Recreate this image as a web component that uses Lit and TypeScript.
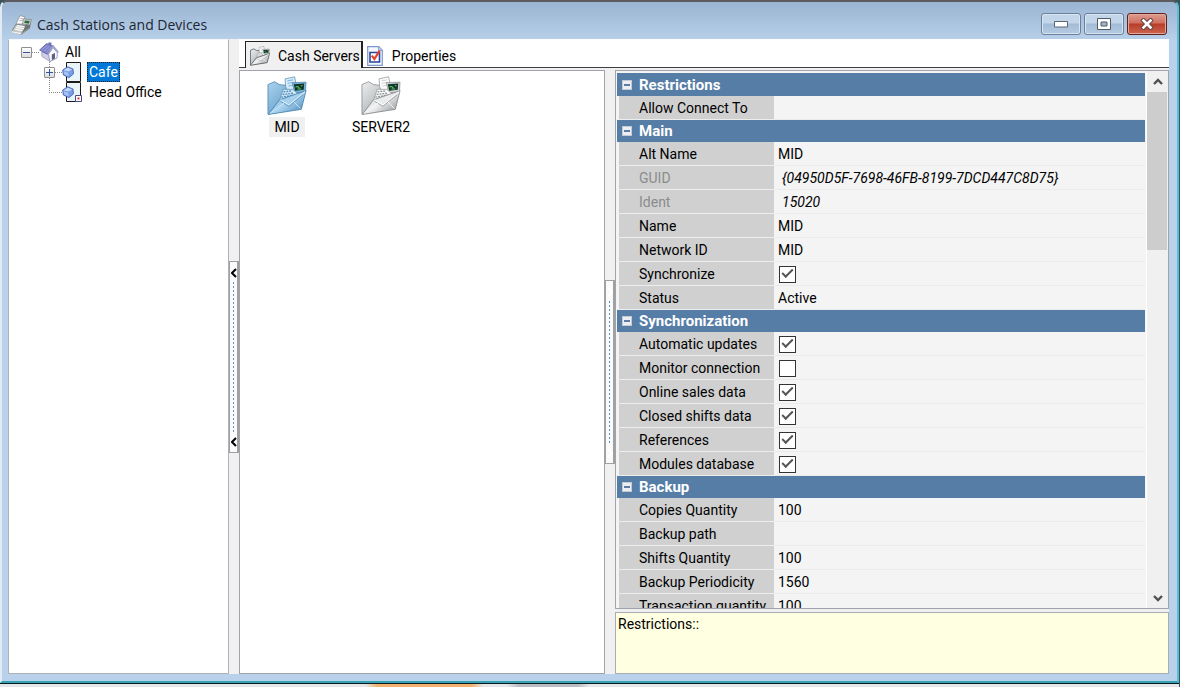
import { LitElement, html, css, svg, nothing } from "lit";
import { customElement, property, state } from "lit/decorators.js";
import { classMap } from "lit/directives/class-map.js";

type Value = string | boolean;
interface Row { label: string; value: Value; readonly?: boolean; }
interface Section { title: string; rows: Row[]; }

const SECTIONS: Section[] = [
  { title: "Restrictions", rows: [{ label: "Allow Connect To", value: "" }] },
  {
    title: "Main",
    rows: [
      { label: "Alt Name", value: "MID" },
      { label: "GUID", value: "{04950D5F-7698-46FB-8199-7DCD447C8D75}", readonly: true },
      { label: "Ident", value: "15020", readonly: true },
      { label: "Name", value: "MID" },
      { label: "Network ID", value: "MID" },
      { label: "Synchronize", value: true },
      { label: "Status", value: "Active" },
    ],
  },
  {
    title: "Synchronization",
    rows: [
      { label: "Automatic updates", value: true },
      { label: "Monitor connection", value: false },
      { label: "Online sales data", value: true },
      { label: "Closed shifts data", value: true },
      { label: "References", value: true },
      { label: "Modules database", value: true },
    ],
  },
  {
    title: "Backup",
    rows: [
      { label: "Copies Quantity", value: "100" },
      { label: "Backup path", value: "" },
      { label: "Shifts Quantity", value: "100" },
      { label: "Backup Periodicity", value: "1560" },
      { label: "Transaction quantity", value: "100" },
    ],
  },
];

const registerIcon = html`<svg width="20" height="20" viewBox="0 0 20 20" aria-hidden="true">
  <path d="M0 16 4 9 15 11 18 13 9 19.5Z" fill="#c4c7c2" stroke="#6d7071" stroke-width=".7"/>
  <path d="M0 16 9 18 9 19.6 0 17.2Z" fill="#f4f4f0"/>
  <path d="M9 18.5 18 12.5 19 6 14 9 12 14Z" fill="#6d7174"/>
  <path d="M4 9 8 .6 13 2 11 9Z" fill="#fdfdfb" stroke="#83868a" stroke-width=".7"/>
  <path d="M8.4 3.6h3M7.6 5.6h3" stroke="#9a9a9a" stroke-width=".8"/>
  <path d="M11.4 4 19.4 4.6 18 10 10.6 9Z" fill="#dfe1dc" stroke="#74777a" stroke-width=".7"/>
  <path d="M12.8 5.4l5 .3-.8 3-4.8-.6Z" fill="#2c6b3e"/>
  <path d="M4 12.4l8 1.4M3 14.2l7.4 1.4M5 10.6l7.4 1.2" stroke="#fff" stroke-width="1.1"/>
</svg>`;

const houseIcon = html`<svg width="20" height="20" viewBox="0 0 20 20" aria-hidden="true">
  <path d="M2.6 10 11 12 11 19.4 3 14.6Z" fill="#cfcfe8" stroke="#8585ae" stroke-width=".6"/>
  <path d="M9.4 12 14 5.6 18.4 11 18 16 11 19.6Z" fill="#fbfbff" stroke="#8a8aac" stroke-width=".8"/>
  <path d="M.6 8 7.6 1.6 14.4 4.2 8.6 12.4Z" fill="#7e81c8" stroke="#5c5fa4" stroke-width=".8"/>
  <path d="M2.6 8 8.4 3.2M4.8 9.2 10.6 4M7 10.6 12.6 4.8" stroke="#abaee2" stroke-width=".8"/>
  <path d="M8.8 12.6 14.4 4.4 19.4 10.6" fill="none" stroke="#a2a4c8" stroke-width="1.6"/>
  <path d="M12.8 12.6 16 11v5.6L12.8 18.2Z" fill="#5d5e86"/>
  <path d="M9.4.4h3v3.2l-3-.8Z" fill="#6c6fb0"/>
</svg>`;

const stationIcon = (mark: boolean) => html`<svg width="20" height="20" viewBox="0 0 20 20" aria-hidden="true">
  <path d="M4.5 .5h14v19h-14Z" fill="#e9f4f9" stroke="#1a1a1a"/>
  <path d="M.7 8 5.6 4.8 11 7 11.4 12 7 15.6 1.4 13Z" fill="#7a9ee6" stroke="#4563b4" stroke-width=".9"/>
  <path d="M1.6 8.2 5.8 5.7 10.2 7.4 6.4 9.6Z" fill="#c5daf8"/>
  <path d="M1.6 9.2 6.2 10.6 6.6 14.4 2.2 12.4Z" fill="#a4c2f4"/>
  ${mark ? svg`<path d="M13.5 13.5h6v6h-6Z" fill="#fff" stroke="#4a4a86"/><path d="M15.5 15.5h2v2h-2Z" fill="#d8323a"/>` : nothing}
</svg>`;

const folderIcon = (size: number, blue: boolean) => {
  const small = size < 30;
  const edge = blue ? "#4983ab" : small ? "#5f6366" : "#85898c";
  const light = blue ? "#a9d3ef" : "#eceeef";
  const mid = blue ? "#78b0d8" : "#cfd2d4";
  const dark = blue ? "#4f8dbb" : "#94989b";
  const paper = blue ? "#d6eaf8" : "#fcfcfc";
  const id = `${blue ? "b" : "g"}${size}`;
  return html`<svg width=${size} height=${size} viewBox="0 0 42 42" aria-hidden="true">
    <defs>
      <linearGradient id=${"back" + id} x1="0" y1="0" x2="1" y2="1"><stop offset="0" stop-color=${light}/><stop offset="1" stop-color=${dark}/></linearGradient>
      <linearGradient id=${"front" + id} x1="0" y1="0" x2="1" y2=".8"><stop offset="0" stop-color=${mid}/><stop offset=".55" stop-color=${light}/><stop offset="1" stop-color=${dark}/></linearGradient>
    </defs>
    <path d="M1 9 8 6 13 9 38 12 34 34 1 40Z" fill=${`url(#back${id})`} stroke=${edge} stroke-width=${small ? 1.8 : 0.8}/>
    <path d="M19 3 29 .8 30.4 8 31 14 22 17 19.5 11Z" fill=${paper} stroke=${edge} stroke-width=".7"/>
    <path d="M21.4 5.2l6-1.2M21.8 7.8l6-1.2M22.4 10.6l5-1" stroke=${mid} stroke-width="1"/>
    <path d="M26.6 7 41 6.4 40.4 17 29 18Z" fill=${mid} stroke=${edge} stroke-width=".7"/>
    <path d="M28.2 8.6 39 8 38.6 14.4 29.6 15.4Z" fill="#12342a"/>
    <path d="M30 11.8l2-1 2 1.8M35.4 10.2h2M32 13.6h4" fill="none" stroke="#57c962" stroke-width="1.1"/>
    <path d="M17 14 27 14 34 20 12 29Z" fill=${paper} stroke=${edge} stroke-width=".7"/>
    <path d="M17.4 16.6l9-1M16.4 19.4l12-1.4M15 22.2l14-2.2" stroke=${dark} stroke-width="1.5" stroke-dasharray="2 1"/>
    <path d="M1.4 40.4 13 25 41 15.4 36 35Z" fill=${`url(#front${id})`} stroke=${edge} stroke-width=${small ? 1.8 : 0.9}/>
    <path d="M14 25 23 30.4 40 16.4" fill="none" stroke=${paper} stroke-width="1.3"/>
    <path d="M14 26.4 23 31.8 38 19.6" fill="none" stroke=${edge} stroke-width=".7"/>
    <path d="M3 39.4 18 28.4M35 34 28 27" fill="none" stroke=${paper} stroke-width=".9"/>
  </svg>`;
};

const propertiesIcon = html`<svg width="16" height="20" viewBox="0 0 16 20" aria-hidden="true">
  <path d="M.7.7h11l3.6 3.6v15H.7Z" fill="#f3f7ff" stroke="#7e98cc" stroke-width="1.2"/>
  <path d="M11.6.8v3.6h3.6" fill="#c4d4f0" stroke="#7e98cc" stroke-width=".9"/>
  <path d="M3 6.5h9.5v9.5H3Z" fill="#fff" stroke="#26469c" stroke-width="1.6"/>
  <path d="M4.8 9.6 7.4 13 12.6 4.6" fill="none" stroke="#e2452c" stroke-width="2.2"/>
</svg>`;

@customElement("split-bar")
class SplitBar extends LitElement {
  @property() arrow: "left" | "right" = "left";
  static styles = css`
    :host { display: flex; flex-direction: column; justify-content: center; background: #f0f0f0; }
    .grip {
      box-sizing: border-box; width: 100%; height: 192px; padding: 6px 0 5px; border: 1px solid #a0a0a0; border-right-width: 2px;
      background: #fafafa; display: flex; flex-direction: column; align-items: center; gap: 4px; cursor: ew-resize;
    }
    .grip.right { height: 184px; }
    .dots { flex: 1; width: 1px; background: repeating-linear-gradient(#5b90c2 0 2px, transparent 2px 4px); }
    path { fill: none; stroke: #000; stroke-width: 2; }
    .right path { stroke: #fff; }
  `;
  render() {
    const tip = html`<svg width="6" height="10" viewBox="0 0 6 10" aria-hidden="true">
      <path d=${this.arrow === "left" ? "M5 1 1 5 5 9" : "M1 1 5 5 1 9"}/></svg>`;
    return html`<button class=${"grip " + this.arrow} aria-label="Toggle pane">${tip}<span class="dots"></span>${tip}</button>`;
  }
}

@customElement("station-tree")
class StationTree extends LitElement {
  @state() private selected = "Cafe";
  static styles = css`
    :host { display: block; background: #fff; padding: 2px 0 0 12px; overflow: hidden; }
    ul { list-style: none; margin: 0; padding: 0; }
    ul ul { margin-left: 23px; }
    .node { display: flex; align-items: center; height: 20px; }
    .box {
      box-sizing: border-box; width: 11px; height: 11px; padding: 0; border: 1px solid #8f8f8f; border-radius: 1px;
      background: linear-gradient(#fff, #dcdcdc); display: grid; place-items: center; color: #34539c; flex: none;
    }
    .line { width: 7px; height: 1px; background: repeating-linear-gradient(90deg, #8a8a8a 0 1px, transparent 1px 2px); }
    .line.wide { width: 13px; margin-left: 5px; }
    .node svg { flex: none; }
    .last { background: repeating-linear-gradient(#8a8a8a 0 1px, transparent 1px 2px) 5px 0 / 1px 10px no-repeat; }
    .trunk { background: repeating-linear-gradient(#8a8a8a 0 1px, transparent 1px 2px) 5px 0 / 1px 20px no-repeat; }
    .name { font: inherit; color: #000; border: 0; background: none; padding: 0 2px; height: 20px; margin-left: 4px; line-height: 20px; }
    ul ul .name { margin-left: 5px; }
    .name.on { background: #0078d7; color: #fff; outline: 1px dotted #222; outline-offset: -1px; }
  `;
  private name(text: string) {
    return html`<button class=${classMap({ name: true, on: this.selected === text })}
      @click=${() => (this.selected = text)}>${text}</button>`;
  }
  private box(plus: boolean) {
    return html`<button class="box" aria-label=${plus ? "Expand" : "Collapse"}><svg width="7" height="7" viewBox="0 0 7 7">
      <path d=${plus ? "M0 3.5h7M3.5 0v7" : "M0 3.5h7"} stroke="currentColor"/></svg></button>`;
  }
  render() {
    return html`<ul>
      <li>
        <div class="node">${this.box(false)}<span class="line"></span>${houseIcon}${this.name("All")}</div>
        <ul>
          <li class="node trunk">${this.box(true)}<span class="line"></span>${stationIcon(false)}${this.name("Cafe")}</li>
          <li class="node last"><span class="line wide"></span>${stationIcon(true)}${this.name("Head Office")}</li>
        </ul>
      </li>
    </ul>`;
  }
}

@customElement("property-grid")
class PropertyGrid extends LitElement {
  @state() private closed = new Set<string>();
  static styles = css`
    :host { display: flex; min-height: 0; background: #f4f4f4; border: 1px solid #a0a4aa; overflow: hidden; }
    .view { flex: 1; min-width: 0; overflow: hidden; padding: 2px 1px 0 1px; }
    table { width: 100%; border-collapse: separate; border-spacing: 0; table-layout: fixed; border-top: 1px solid #567da6; }
    .label-col { width: 157px; }
    th, td { padding: 0; height: 24px; box-sizing: border-box; text-align: left; font-weight: 400; white-space: nowrap; }
    .section { height: 22px; background: #567da6; }
    .toggle {
      display: flex; align-items: center; gap: 7px; width: 100%; height: 22px; border: 0; padding: 0 0 0 5px;
      background: none; color: #fff; font: inherit; font-size: 15px; font-weight: 700; line-height: 22px; text-align: left;
    }
    .sign { width: 10px; height: 10px; background: #eceef2; border: 1px solid #c3cbd6; box-sizing: border-box; display: grid; place-items: center; }
    .sign::after { content: ""; width: 6px; height: 2px; background: #5d7ba3; }
    .label { padding: 1px 0 0 22px; border-bottom: 1px solid #ededed; background: linear-gradient(#d0d0d0 0 0) 2px 0 no-repeat; }
    .label label { display: block; }
    .value { padding: 1px 0 0 4px; border-bottom: 1px solid #ebebeb; }
    .readonly .label { color: #8c8c8c; }
    .readonly .value { font-style: italic; padding-left: 8px; }
    input[type="text"] {
      display: block; width: 100%; height: 22px; box-sizing: border-box; border: 0; padding: 0; margin: 0;
      background: none; font: inherit; color: inherit; outline: 0;
    }
    input[type="checkbox"] {
      appearance: none; display: grid; place-items: center; box-sizing: border-box; width: 17px; height: 17px;
      margin: 0 0 0 1px; border: 1px solid #333; background: #fff;
    }
    input[type="checkbox"]:checked::after {
      content: ""; width: 9px; height: 4px; border: solid #555; border-width: 0 0 2px 2px; transform: rotate(-45deg); margin-bottom: 4px;
    }
    .scroll { width: 21px; display: flex; flex-direction: column; background: #f0f0f0; border-left: 1px solid #fff; }
    .arrow { border: 0; padding: 0; height: 21px; background: none; display: grid; place-items: center; }
    .arrow path { fill: none; stroke: #505050; stroke-width: 2.4; }
    .track { flex: 1; }
    .thumb { height: 32%; background: #cdcdcd; margin-right: 1px; }
  `;
  private toggle(title: string) {
    const next = new Set(this.closed);
    next.has(title) ? next.delete(title) : next.add(title);
    this.closed = next;
  }
  private row(r: Row) {
    const id = r.label.toLowerCase().replace(/ /g, "-");
    return html`<tr class=${classMap({ readonly: !!r.readonly })}>
      <th class="label" scope="row"><label for=${id}>${r.label}</label></th>
      <td class="value">${typeof r.value === "boolean"
        ? html`<input id=${id} type="checkbox" .checked=${r.value}>`
        : html`<input id=${id} type="text" .value=${r.value} ?readonly=${r.readonly}>`}</td>
    </tr>`;
  }
  render() {
    return html`
      <div class="view">
        <table>
          <colgroup><col class="label-col"><col></colgroup>
          ${SECTIONS.map((s) => html`<tbody>
            <tr><th class="section" colspan="2" scope="rowgroup">
              <button class="toggle" @click=${() => this.toggle(s.title)}><span class="sign"></span>${s.title}</button>
            </th></tr>
            ${this.closed.has(s.title) ? nothing : s.rows.map((r) => this.row(r))}
          </tbody>`)}
        </table>
      </div>
      <div class="scroll">
        <button class="arrow" aria-label="Scroll up"><svg width="10" height="8" viewBox="0 0 10 8"><path d="M1 6 5 2 9 6"/></svg></button>
        <div class="track"><div class="thumb"></div></div>
        <button class="arrow" aria-label="Scroll down"><svg width="10" height="8" viewBox="0 0 10 8"><path d="M1 2 5 6 9 2"/></svg></button>
      </div>`;
  }
}

@customElement("app-root")
class AppRoot extends LitElement {
  @state() private tab = 0;
  static styles = css`
    :host {
      display: flex; flex-direction: column; height: 100vh; box-sizing: border-box; padding-right: 1px; overflow: hidden;
      font: 14px/20px Roboto, "Liberation Sans", sans-serif; color: #000; background: #36545e;
    }
    .window {
      flex: 1; min-height: 0; box-sizing: border-box; display: flex; flex-direction: column; padding: 0 8px 7px 6px;
      background: linear-gradient(#9ab4d2, #b9d1ea 40px, #b9d1ea);
      border: 2px solid; border-color: #5c5c5e #58bdd6 #35a3b4 #e2ebf3;
      border-radius: 7px 7px 0 0;
    }
    .below { height: 3px; border-top: 1px solid #0b1a20; background: linear-gradient(90deg, #e4e6e8 31%, #f2b26e 32% 40%, #e4e6e8 41% 43%, #b9bcc0 44% 49%, #e4e6e8 50%); }
    .title { display: flex; align-items: center; height: 37px; padding-left: 4px; gap: 5px; }
    .title svg { flex: none; }
    h1 { flex: 1; margin: 0; font: 14px/20px "Open Sans", sans-serif; color: #1c2733; padding-top: 8px; }
    .title > svg { margin-top: 8px; }
    .controls { display: flex; gap: 3px; padding-top: 7px; padding-right: 2px; }
    .ctl {
      box-sizing: border-box; width: 40px; height: 22px; padding: 0; border: 1px solid #6b8099; border-radius: 3px;
      background: linear-gradient(#c3d5e9 0 45%, #a3bcd6 50%, #b5cbe2); box-shadow: inset 0 0 0 1px #d8e5f2; display: grid; place-items: center;
    }
    .close { border-color: #5e2020; background: linear-gradient(#dd9d92 0, #d0705f 45%, #b93c28 50%, #cc6650); box-shadow: inset 0 0 0 1px #e2a89c; }
    .body { flex: 1; min-height: 0; display: grid; grid-template-columns: minmax(120px, 221px) 10px minmax(0, 1fr); background: #f0f0f0; }
    station-tree { border: 1px solid #aeb2b8; border-top-color: #f4f6f8; }
    .main { display: flex; flex-direction: column; min-height: 0; }
    .tabs { display: flex; align-items: flex-end; height: 29px; box-sizing: border-box; padding-left: 6px; background: linear-gradient(#404040 0 0) 0 100% / 100% 1px no-repeat #fff; }
    .tab {
      box-sizing: border-box; height: 27px; border: 0; padding: 2px 4px 0; background: none; font: inherit; color: inherit;
      display: flex; align-items: center; gap: 9px; line-height: 24px;
    }
    .tab.on { background: #f0f0f0; border: 1px solid #222; border-width: 1px 2px 0 1px; padding: 2px 1px 0 4px; gap: 8px; }
    .panes { flex: 1; min-height: 0; display: grid; grid-template-columns: 366px 10px minmax(0, 1fr); padding-top: 2px; }
    .list { background: #fff; border: 1px solid #a0a4aa; padding: 5px 0 0; display: flex; align-items: flex-start; }
    .item { width: 94px; border: 0; padding: 0; background: none; font: inherit; color: inherit; display: flex; flex-direction: column; align-items: center; gap: 1px; }
    .item span { padding: 0 5px; }
    .item.on span { background: #f0f0f0; }
    .side { display: flex; flex-direction: column; gap: 3px; min-height: 0; }
    property-grid { flex: 1; }
    .hint { height: 62px; box-sizing: border-box; border: 1px solid #a9adb3; background: #ffffe1; padding: 1px 2px; }
    .hint p { margin: 0; }
  `;
  render() {
    return html`
      <div class="window">
        <header class="title">
          ${registerIcon}
          <h1>Cash Stations and Devices</h1>
          <div class="controls">
            <button class="ctl" aria-label="Minimize"><svg width="14" height="7" viewBox="0 0 14 7"><path d="M.5 .5h13v5.5H.5Z" fill="#fff" stroke="#5b6672"/></svg></button>
            <button class="ctl" aria-label="Maximize"><svg width="14" height="12" viewBox="0 0 14 12"><path d="M.5.5h13v11H.5Z" fill="#fff" stroke="#4f5a66"/><path d="M4 4h6v4H4Z" fill="#9fb5cc" stroke="#4f5a66"/></svg></button>
            <button class="ctl close" aria-label="Close"><svg width="14" height="12" viewBox="0 0 14 12"><path d="M3.5 2.5 10.5 9.5M10.5 2.5 3.5 9.5" stroke="#6a4646" stroke-width="4.6" stroke-linecap="square"/><path d="M3.5 2.5 10.5 9.5M10.5 2.5 3.5 9.5" stroke="#fff" stroke-width="2.6" stroke-linecap="square"/></svg></button>
          </div>
        </header>
        <div class="body">
          <station-tree></station-tree>
          <split-bar arrow="left"></split-bar>
          <main class="main">
            <nav class="tabs">
              <button class=${classMap({ tab: true, on: this.tab === 0 })} @click=${() => (this.tab = 0)}>${folderIcon(20, false)}Cash Servers</button>
              <button class=${classMap({ tab: true, on: this.tab === 1 })} @click=${() => (this.tab = 1)}>${propertiesIcon}Properties</button>
            </nav>
            <div class="panes">
              <div class="list">
                <button class="item on">${folderIcon(40, true)}<span>MID</span></button>
                <button class="item">${folderIcon(40, false)}<span>SERVER2</span></button>
              </div>
              <split-bar arrow="right"></split-bar>
              <div class="side">
                <property-grid></property-grid>
                <div class="hint"><p>Restrictions::</p></div>
              </div>
            </div>
          </main>
        </div>
      </div>
      <div class="below"></div>`;
  }
}
